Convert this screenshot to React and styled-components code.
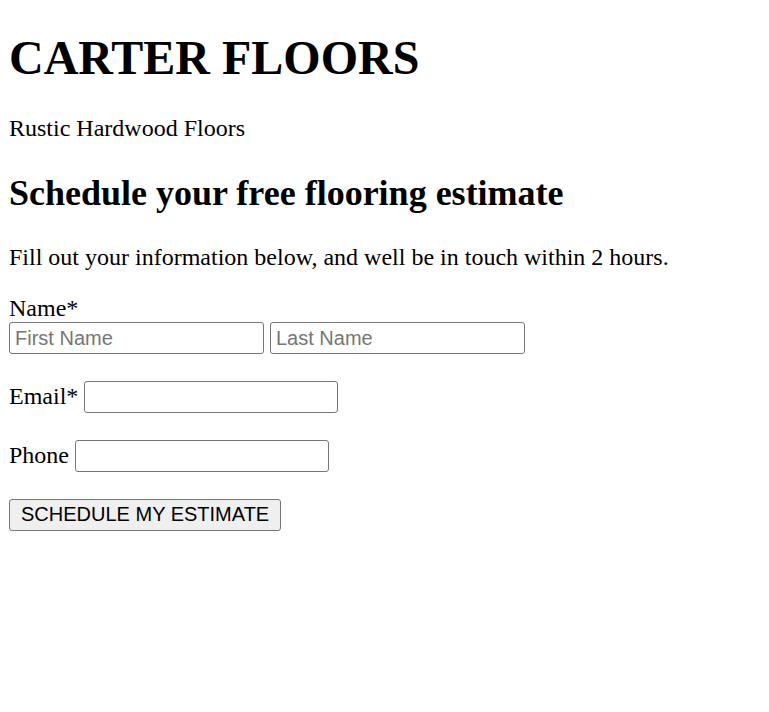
import React from "react";
import styled, { createGlobalStyle } from "styled-components";

const Global = createGlobalStyle`
  html, body { margin: 0; padding: 0; background: #fff; }
  body { font-family: "Liberation Serif", "Times New Roman", serif; color: #000; }
`;

const Page = styled.div`
  padding: 30px 0 0 9px;
  display: flex;
  flex-direction: column;
  align-items: flex-start;
`;

const Title = styled.h1`
  margin: 0;
  font-size: 48px;
  font-weight: 700;
  line-height: normal;
`;

const Text = styled.p`
  margin: ${(p) => p.$top}px 0 0;
  font-size: 24px;
  line-height: normal;
`;

const Subtitle = styled.h2`
  margin: 30px 0 0;
  font-size: 36px;
  font-weight: 700;
  line-height: normal;
`;

const Form = styled.form`
  margin-top: 24px;
  display: flex;
  flex-direction: column;
  align-items: flex-start;
`;

const Label = styled.label`
  font-size: 24px;
  line-height: normal;
`;

const InputPair = styled.div`
  margin-top: 0.5px;
  display: flex;
  gap: 6px;
`;

const Row = styled.div`
  margin-top: 27px;
  display: flex;
  align-items: baseline;
  gap: 6px;
`;

const Field = styled.input`
  box-sizing: border-box;
  width: ${(p) => p.$w || 255}px;
  height: 32px;
  padding: 0 5px;
  border: 1px solid #767676;
  border-radius: 3px;
  background: #fff;
  font-family: "Liberation Sans", Arial, sans-serif;
  font-size: 20px;
  color: #000;
  outline: none;
  &::placeholder { color: #757575; }
`;

const Button = styled.button`
  margin-top: 26.5px;
  box-sizing: border-box;
  height: 32px;
  padding: 0 11px;
  border: 1px solid #767676;
  border-radius: 3px;
  background: #efefef;
  font-family: "Liberation Sans", Arial, sans-serif;
  font-size: 20px;
  color: #000;
  cursor: pointer;
`;

export default function App() {
  return (
    <>
      <Global />
      <Page>
        <Title>CARTER FLOORS</Title>
        <Text $top={30}>Rustic Hardwood Floors</Text>
        <Subtitle>Schedule your free flooring estimate</Subtitle>
        <Text $top={29.5}>Fill out your information below, and well be in touch within 2 hours.</Text>
        <Form onSubmit={(e) => e.preventDefault()}>
          <Label>Name*</Label>
          <InputPair>
            <Field placeholder="First Name" />
            <Field placeholder="Last Name" />
          </InputPair>
          <Row>
            <Label>Email*</Label>
            <Field type="email" $w={254} />
          </Row>
          <Row>
            <Label>Phone</Label>
            <Field type="tel" $w={254} />
          </Row>
          <Button type="submit">SCHEDULE MY ESTIMATE</Button>
        </Form>
      </Page>
    </>
  );
}
